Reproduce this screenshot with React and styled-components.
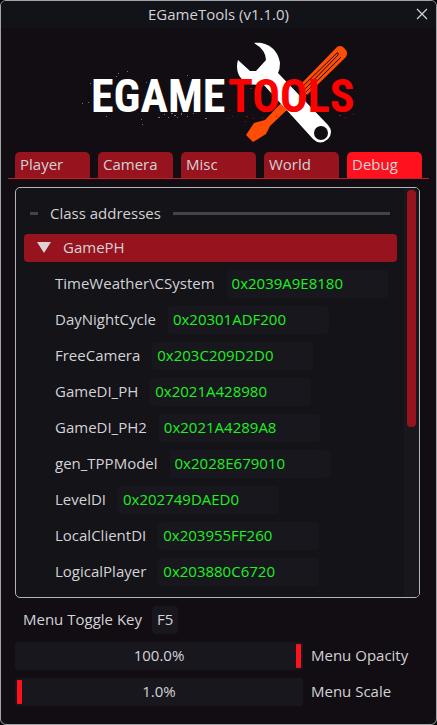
import React, { useState } from 'react';
import styled, { createGlobalStyle } from 'styled-components';

const GlobalStyle = createGlobalStyle`
  * {
    box-sizing: border-box;
  }

  body {
    margin: 0;
    background: #050506;
    color: #d3d2d6;
    font: 15px/26px "Open Sans", "Noto Sans", sans-serif;
  }

  button, input {
    font: inherit;
    color: inherit;
  }
`;

const Window = styled.main`
  display: flex;
  flex-direction: column;
  min-height: 100vh;
  padding: 0 16px 18px 14px;
  border: 1px solid #a3a3a8;
  border-radius: 6px;
  background: #110d12;
`;

const TitleBar = styled.header`
  display: grid;
  grid-template-columns: 24px 1fr 24px;
  align-items: start;
  height: 27px;
  margin: 0 -16px 0 -14px;
  border-radius: 5px 5px 0 0;
  background: #121318;
  text-align: center;
`;

const Title = styled.h1`
  grid-column: 2;
  margin: 0;
  font-size: 15px;
  font-weight: 400;
`;

const CloseButton = styled.button`
  display: flex;
  align-items: center;
  justify-content: flex-end;
  height: 26px;
  padding: 0 5px 0 0;
  border: 0;
  background: none;
`;

const Logo = styled.svg`
  align-self: center;
  width: 280px;
  height: 108px;
  margin: 8px 0;
  font: bold 46px "Roboto Condensed", Roboto, sans-serif;
`;

const Tabs = styled.nav`
  display: flex;
  gap: 8px;
  margin: 0 -9px 8px -7px;
  padding: 0 7px;
  border-bottom: 1px solid #c4202a;
`;

const Tab = styled.button`
  flex: 1;
  height: 26px;
  padding: 0 5px 2px;
  border: 0;
  border-radius: 5px 5px 0 0;
  background: ${props => props.$active ? '#ff121d' : '#97141e'};
  line-height: 24px;
  text-align: left;
`;

const Panel = styled.section`
  display: flex;
  flex: 1;
  gap: 7px;
  border: 1px solid #b4b4b8;
  border-radius: 5px;
  background: #131318;
  overflow: hidden;
`;

const PanelContent = styled.div`
  display: flex;
  flex: 1;
  flex-direction: column;
  gap: 8px;
  padding: 12px 0 11px 8px;
`;

const Separator = styled.h2`
  display: flex;
  align-items: center;
  gap: 12px;
  margin: 0;
  padding: 0 7px 0 6px;
  font-size: 15px;
  font-weight: 400;

  &::before, &::after {
    content: '';
    width: 8px;
    height: 3px;
    background: #434348;
  }

  &::after {
    flex: 1;
  }
`;

const GroupHeader = styled.button`
  display: flex;
  align-items: center;
  gap: 12px;
  height: 28px;
  padding: 0 13px 2px;
  border: 0;
  border-radius: 4px;
  background: #97141e;
`;

const Row = styled.div`
  display: flex;
  gap: 12px;
  padding-left: 31px;
`;

const AddressField = styled.input`
  width: 161px;
  height: 28px;
  padding: 0 5px 2px;
  border: 0;
  border-radius: 4px;
  background: #19171e;
  color: #1df022;
`;

const ScrollTrack = styled.div`
  width: 15px;
  padding: 2px 3px 0;
  background: #19171e;
`;

const ScrollThumb = styled.div`
  height: 237px;
  border-radius: 4px;
  background: #97141e;
`;

const Settings = styled.div`
  display: flex;
  flex-direction: column;
  gap: 8px;
  padding-top: 8px;
`;

const HotkeyRow = styled.div`
  display: flex;
  gap: 10px;
  padding-left: 8px;
`;

const KeyButton = styled.button`
  height: 28px;
  padding: 0 5px 2px;
  border: 0;
  border-radius: 4px;
  background: #19171e;
`;

const SliderRow = styled.div`
  display: grid;
  grid-template-columns: 1fr 109px;
  gap: 8px;
`;

const SliderBox = styled.div`
  display: grid;
  border-radius: 4px;
  background: #19171e;
  text-align: center;

  > * {
    grid-area: 1 / 1;
  }
`;

const Range = styled.input`
  appearance: none;
  width: 100%;
  height: 28px;
  margin: 0;
  padding: 0 2px;
  background: none;

  &::-webkit-slider-thumb {
    appearance: none;
    width: 5px;
    height: 24px;
    border-radius: 1px;
    background: #ff121d;
  }
`;

const SliderValue = styled.output`
  pointer-events: none;
`;

const tabs = ['Player', 'Camera', 'Misc', 'World', 'Debug'];

const addresses = [
  ['TimeWeather\\CSystem', '0x2039A9E8180'],
  ['DayNightCycle', '0x20301ADF200'],
  ['FreeCamera', '0x203C209D2D0'],
  ['GameDI_PH', '0x2021A428980'],
  ['GameDI_PH2', '0x2021A4289A8'],
  ['gen_TPPModel', '0x2028E679010'],
  ['LevelDI', '0x202749DAED0'],
  ['LocalClientDI', '0x203955FF260'],
  ['LogicalPlayer', '0x203880C6720'],
];

const whiteSpecks = 'M127 71h1v1h-1zM118 73h1v1h-1zM116 76h1v1h-1zM90 83h1v1h-1zM88 102h1v1h-1zM82 103h1v1h-1zM106 116h1v1h-1zM145 106h1v1h-1zM141 119h1v1h-1zM142 124h1v1h-1zM158 117h2v1h-2zM164 114h1v1h-1zM168 117h1v1h-1zM171 113h2v1h-2zM174 115h2v1h-2zM177 117h1v1h-1zM181 113h1v2h-1zM187 116h1v1h-1zM193 113h1v1h-1zM205 118h2v1h-2zM146 82h1v1h-1zM187 75h1v1h-1z';
const redSpecks = 'M228 81h1v1h-1zM229 110h1v1h-1zM232 116h1v1h-1zM227 118h1v1h-1zM246 116h2v1h-2zM253 118h1v1h-1zM245 121h1v1h-1zM276 116h1v1h-1zM290 115h1v1h-1zM339 115h2v1h-2zM345 117h1v1h-1zM353 114h1v1h-1zM351 84h1v1h-1zM354 101h1v1h-1zM250 88h2v1h-2zM262 117h1v1h-1z';

const EGameLogo = () => (
  <Logo viewBox="78 36 280 108" role="img" aria-label="EGameTools">
    <path fill="#ff4d05" d="M337 47Q340 45 343 47L346 50Q348 53 346 57L307 95L299 86ZM283 101L290 107L270 126L266 134L253 142L246 135L254 123L265 120Z" />
    <path stroke="#110d12" strokeWidth="1" fill="none" d="M302 87L336 54Q339 51 338 55L304 90M306 92L341 57" />
    <path fill="#fff" d="M254 43C264 41 278 47 280 63Q280 69 278 73L328 125Q334 132 328 139Q320 146 313 139L263 84C252 87 241 82 238 73Q236 66 238 60L250 71H256L266 60Q266 50 254 43Z" />
    <circle cx="321" cy="133" r="7" fill="#110d12" />
    <path fill="#77767c" d={whiteSpecks} />
    <path fill="#a20610" d={redSpecks} />
    <text x="91" y="112" fill="#fff">EGAME</text>
    <text x="228" y="112" fill="#ff0000">TOOLS</text>
  </Logo>
);

const Slider = ({ id, label, initial, max }) => {
  const [value, setValue] = useState(initial);

  return (
    <SliderRow>
      <SliderBox>
        <Range id={id} type="range" min="1" max={max} value={value} onChange={e => setValue(Number(e.target.value))} />
        <SliderValue htmlFor={id}>{value.toFixed(1)}%</SliderValue>
      </SliderBox>
      <label htmlFor={id}>{label}</label>
    </SliderRow>
  );
};

const App = () => {
  const [active, setActive] = useState('Debug');

  return (
    <>
      <GlobalStyle />
      <Window>
        <TitleBar>
          <Title>EGameTools (v1.1.0)</Title>
          <CloseButton aria-label="Close">
            <svg width="18" height="18" viewBox="0 0 18 18" stroke="#d3d2d6" strokeWidth="1.2">
              <path d="M4 4L14 14M14 4L4 14" />
            </svg>
          </CloseButton>
        </TitleBar>
        <EGameLogo />
        <Tabs>
          {tabs.map(tab => (
            <Tab key={tab} $active={tab === active} onClick={() => setActive(tab)}>{tab}</Tab>
          ))}
        </Tabs>
        <Panel>
          <PanelContent>
            <Separator>Class addresses</Separator>
            <GroupHeader>
              <svg width="14" height="12" viewBox="0 0 14 12" fill="#dcd3d6">
                <path d="M0 1H14L7 12Z" />
              </svg>
              GamePH
            </GroupHeader>
            {addresses.map(([name, address]) => (
              <Row key={name}>
                <label htmlFor={name}>{name}</label>
                <AddressField id={name} value={address} readOnly />
              </Row>
            ))}
          </PanelContent>
          <ScrollTrack>
            <ScrollThumb />
          </ScrollTrack>
        </Panel>
        <Settings>
          <HotkeyRow>
            <span>Menu Toggle Key</span>
            <KeyButton>F5</KeyButton>
          </HotkeyRow>
          <Slider id="opacity" label="Menu Opacity" initial={100} max={100} />
          <Slider id="scale" label="Menu Scale" initial={1} max={3} />
        </Settings>
      </Window>
    </>
  );
};
export default App;
